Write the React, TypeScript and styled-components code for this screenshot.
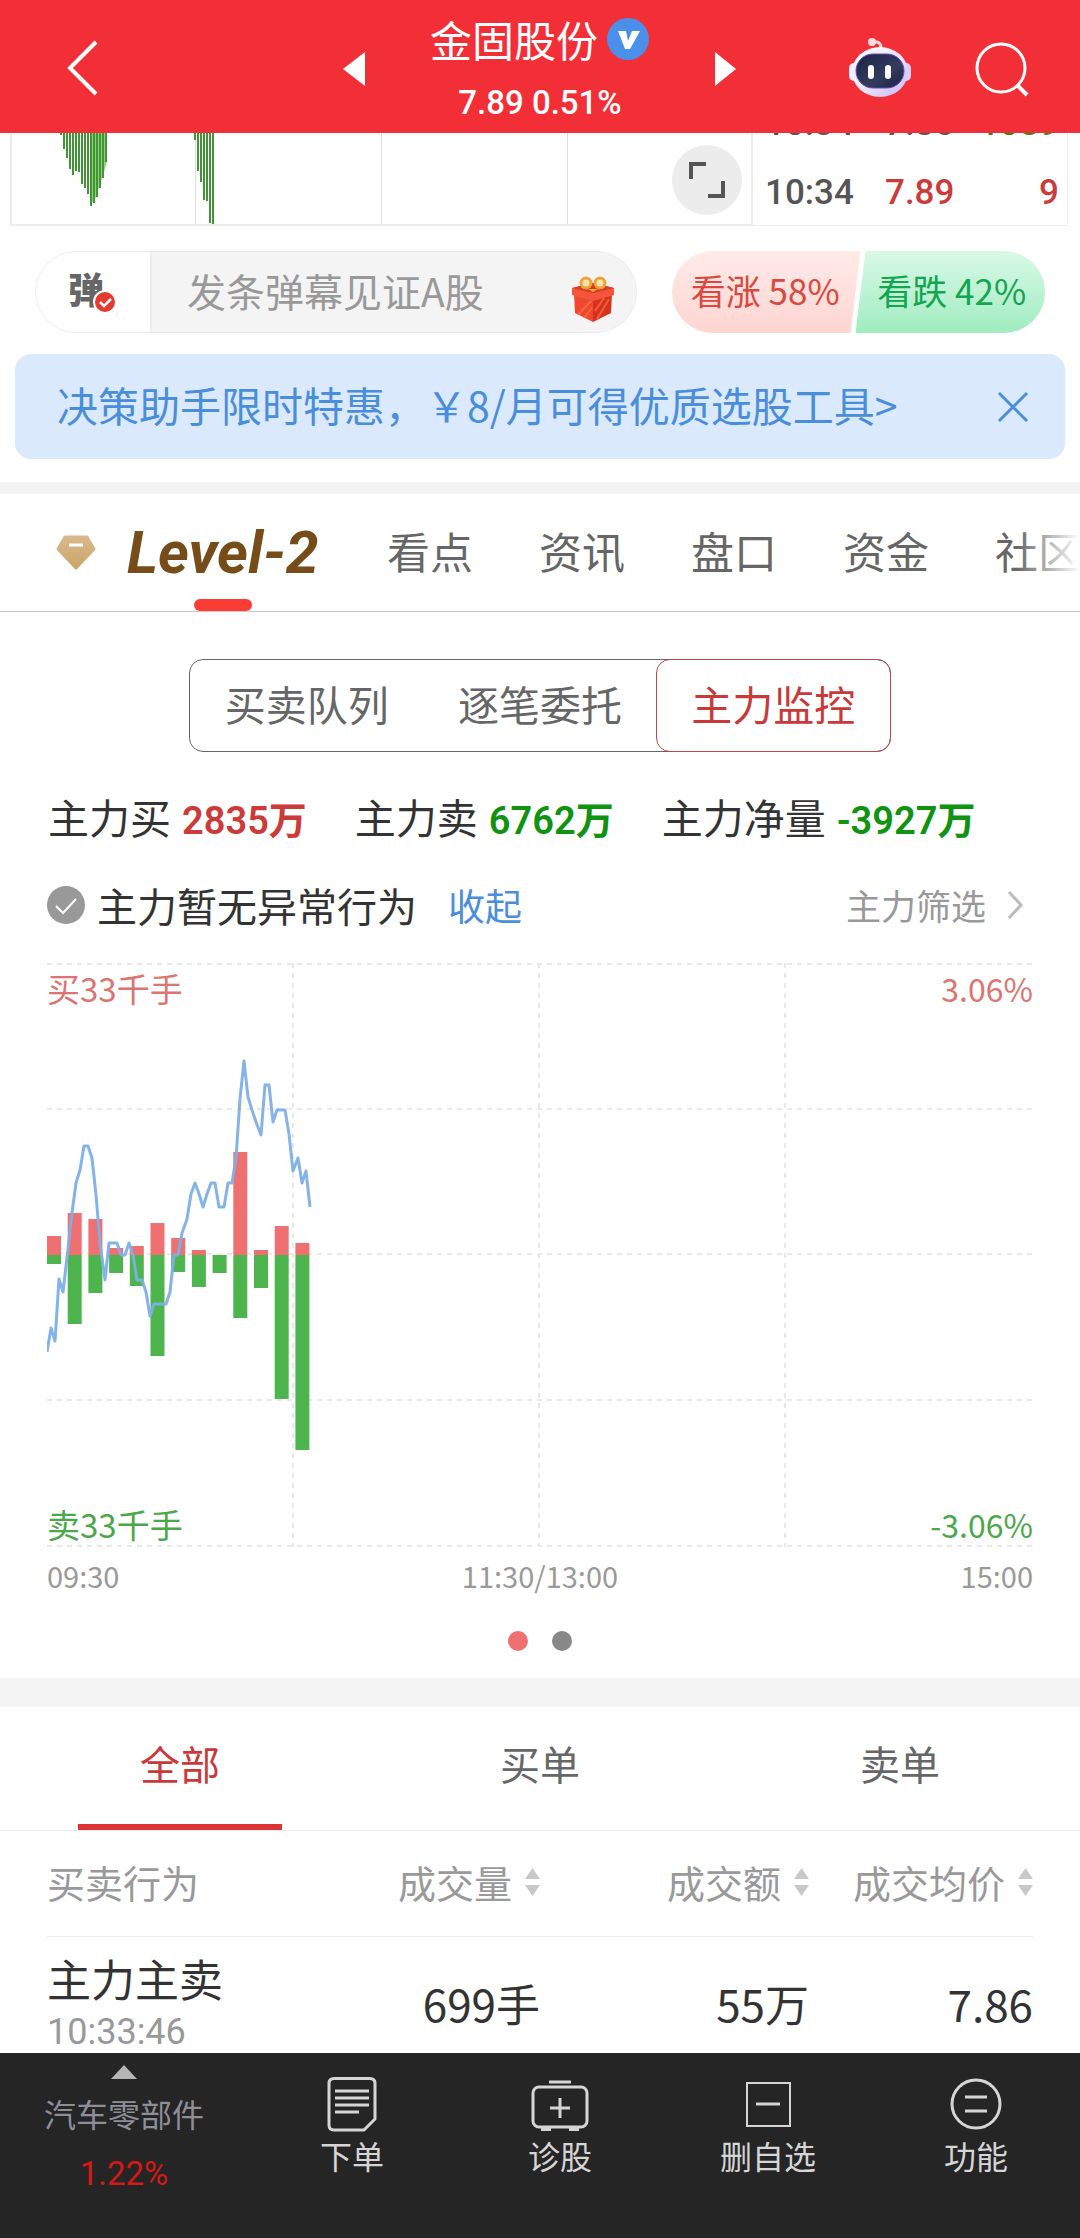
import React from "react";
import styled, { createGlobalStyle } from "styled-components";

const NUM = `Roboto, "Noto Sans CJK SC", sans-serif`;

const Global = createGlobalStyle`
  * { box-sizing: border-box; }
  body { margin: 0; background: #fff; color: #333; font-family: "Noto Sans CJK SC", sans-serif; }
  button { border: 0; padding: 0; margin: 0; background: none; font: inherit; color: inherit; cursor: pointer; }
  svg { display: block; flex: none; }
`;

const Page = styled.div`
  display: flex;
  flex-direction: column;
  min-height: 100vh;
  overflow-x: hidden;
`;

const Main = styled.main`
  flex: 1;
`;

/* ---------- header ---------- */

const Header = styled.header`
  display: grid;
  grid-template-columns: minmax(0, 1fr) auto minmax(0, 1fr);
  align-items: center;
  height: 133px;
  background: #f22f37;
  color: #fff;
`;

const HeaderSide = styled.div`
  display: flex;
  justify-content: space-between;
  align-items: center;
  padding: 4px 50px 0 65px;
`;

const HeaderLeft = styled(HeaderSide)`
  padding-right: 65px;
`;

const HeaderTools = styled.div`
  display: flex;
  align-items: center;
  gap: 62px;
`;

const Title = styled.div`
  display: flex;
  flex-direction: column;
  align-items: center;
  align-self: start;
  gap: 10px;
  padding-top: 9px;
`;

const StockName = styled.h1`
  display: flex;
  align-items: center;
  gap: 9px;
  margin: 0;
  font-size: 42px;
  font-weight: 400;
  line-height: 60px;
`;

const StockPrice = styled.div`
  font: 500 33px/48px ${NUM};
`;

/* ---------- minute chart strip ---------- */

const Strip = styled.section`
  display: flex;
  height: 93px;
  padding: 0 12px 0 10px;
  overflow: hidden;
`;

const MiniPlot = styled.div`
  position: relative;
  flex: 1;
  border: solid #ececec;
  border-width: 0 1px 2px 2px;
  overflow: hidden;
`;

const ExpandButton = styled.button`
  position: absolute;
  right: 9px;
  top: 12px;
  width: 70px;
  height: 70px;
  border-radius: 50%;
  background: #ececec;
  display: grid;
  place-items: center;
`;

const Ticks = styled.div`
  display: flex;
  flex-direction: column;
  justify-content: flex-end;
  width: 316px;
  border: solid #ececec;
  border-width: 0 1px 1px;
`;

const Tick = styled.div`
  display: grid;
  flex: none;
  grid-template-columns: 120px 1fr auto;
  align-items: center;
  height: 69px;
  padding: 4px 8px 0 12px;
  font: 500 35px/65px ${NUM};
  color: #555;
`;

const Tone = styled.span<{ $c: string }>`
  color: ${(p) => p.$c};
`;

/* ---------- bullet comments ---------- */

const CommentRow = styled.section`
  display: flex;
  gap: 35px;
  padding: 25px 35px 21px;
`;

const CommentBox = styled.div`
  display: flex;
  align-items: center;
  flex: 1;
  min-width: 0;
  height: 82px;
  border: 1px solid #ececec;
  border-radius: 41px;
  background: #f4f4f4;
  overflow: hidden;
`;

const BulletToggle = styled.button`
  position: relative;
  flex: none;
  width: 116px;
  height: 100%;
  padding: 0 14px 8px 0;
  border-right: 2px solid #ececec;
  background: #fff;
  color: #666;
  font-size: 36px;
  font-weight: 900;
  line-height: 70px;
`;

const BulletBadge = styled.svg`
  position: absolute;
  left: 57px;
  top: 38px;
`;

const CommentInput = styled.input`
  flex: 1;
  min-width: 0;
  padding: 0 0 5px 35px;
  border: 0;
  outline: 0;
  background: none;
  font-family: inherit;
  font-size: 39px;
  color: #333;
  &::placeholder { color: #999; opacity: 1; }
`;

const GiftButton = styled.button`
  flex: none;
  margin: 14px 21px 0 0;
`;

const Vote = styled.div`
  display: flex;
  width: 373px;
  height: 82px;
  border-radius: 41px;
  overflow: hidden;
`;

const VoteButton = styled.button<{ $up?: boolean }>`
  flex: 1;
  font-size: 35px;
  line-height: 78px;
  white-space: nowrap;
  margin-left: ${(p) => (p.$up ? 0 : "-5px")};
  padding: ${(p) => (p.$up ? "0 2px 4px 0" : "0 0 4px 3px")};
  color: ${(p) => (p.$up ? "#d9493f" : "#14a551")};
  background: ${(p) => (p.$up ? "linear-gradient(#ffebe9, #fdd5d1)" : "linear-gradient(#d9f9e6, #a0ecc0)")};
  clip-path: ${(p) =>
    p.$up
      ? "polygon(0 0, 100% 0, calc(100% - 10px) 100%, 0 100%)"
      : "polygon(10px 0, 100% 0, 100% 100%, 0 100%)"};
`;

const Banner = styled.aside`
  display: flex;
  align-items: center;
  justify-content: space-between;
  height: 105px;
  margin: 0 15px 23px;
  padding: 0 36px 0 42px;
  border-radius: 16px;
  background: #dae9fb;
  color: #4a8edb;
`;

const BannerLink = styled.a`
  padding-bottom: 5px;
  color: inherit;
  font-size: 41px;
  line-height: 60px;
  text-decoration: none;
  white-space: nowrap;
`;

const Divider = styled.div<{ $h: number }>`
  height: ${(p) => p.$h}px;
  background: #f4f4f4;
`;

/* ---------- main tabs ---------- */

const MainTabs = styled.nav`
  position: relative;
  display: flex;
  align-items: center;
  gap: 66px;
  height: 118px;
  padding-left: 55px;
  border-bottom: 1px solid #c8c8c8;
  overflow: hidden;
  &::after {
    content: "";
    position: absolute;
    inset: 0 0 0 auto;
    width: 64px;
    background: linear-gradient(90deg, rgba(255, 255, 255, 0), #fff);
  }
`;

const MainTab = styled.button`
  flex: none;
  padding-bottom: 5px;
  font-size: 43px;
  line-height: 60px;
  color: #666;
`;

const LevelTab = styled.button`
  position: relative;
  display: flex;
  flex: none;
  align-items: center;
  gap: 30px;
  width: 266px;
  height: 100%;
  color: #764d18;
  font: italic 700 59px/60px ${NUM};
  &::after {
    content: "";
    position: absolute;
    left: 139px;
    bottom: 0;
    width: 58px;
    height: 12px;
    border-radius: 6px;
    background: #fa3c32;
  }
`;

/* ---------- monitor panel ---------- */

const Segments = styled.div`
  display: flex;
  width: 702px;
  height: 93px;
  margin: 47px auto 0;
  border: 1px solid #666;
  border-radius: 14px;
`;

const Segment = styled.button<{ $active?: boolean }>`
  flex: 1;
  margin: -1px;
  padding-bottom: 5px;
  font-size: 41px;
  line-height: 60px;
  color: ${(p) => (p.$active ? "#c9393a" : "#666")};
  border: 1px solid ${(p) => (p.$active ? "#b9494a" : "transparent")};
  border-radius: 14px;
`;

const Stats = styled.div`
  display: flex;
  gap: 48px;
  padding: 34px 47px 0 48px;
  white-space: nowrap;
`;

const Stat = styled.div<{ $c: string }>`
  display: flex;
  align-items: baseline;
  gap: 11px;
  height: 60px;
  font-size: 41px;
  line-height: 60px;
  b {
    color: ${(p) => p.$c};
    font: 600 38px/60px ${NUM};
  }
`;

const StatusRow = styled.div`
  display: flex;
  align-items: center;
  padding: 29px 56px 0 47px;
  font-size: 40px;
  line-height: 60px;
`;

const StatusText = styled.span`
  margin: 0 31px 0 12px;
`;

const FoldButton = styled.button`
  color: #4a8edb;
  font-size: 37px;
`;

const FilterButton = styled.button`
  display: flex;
  align-items: center;
  gap: 20px;
  margin-left: auto;
  color: #999;
  font-size: 35px;
`;

const ChartFrame = styled.div`
  position: relative;
  margin: 28px 47px 0;
`;

const ChartSvg = styled.svg`
  width: 100%;
  height: auto;
`;

const ChartLabel = styled.span<{ $right?: boolean; $bottom?: boolean }>`
  position: absolute;
  ${(p) => (p.$right ? "right: 0;" : "left: 0;")}
  ${(p) => (p.$bottom ? "bottom: 3px;" : "top: 5px;")}
  font-size: ${(p) => (p.$right ? 32 : 33)}px;
  line-height: 40px;
  color: ${(p) => (p.$bottom ? "#4aa84a" : "#dc7472")};
`;

const Axis = styled.div`
  display: grid;
  grid-template-columns: 1fr auto 1fr;
  padding: 6px 47px 0;
  color: #999;
  font-size: 29px;
  line-height: 44px;
  span:last-child { text-align: right; }
`;

const Dots = styled.div`
  display: flex;
  justify-content: center;
  gap: 24px;
  padding: 34px 0 27px;
`;

const Dot = styled.button<{ $active?: boolean }>`
  width: 20px;
  height: 20px;
  border-radius: 50%;
  background: ${(p) => (p.$active ? "#ee7071" : "#888")};
`;

/* ---------- orders ---------- */

const OrderTabs = styled.nav`
  display: grid;
  grid-template-columns: repeat(3, 1fr);
  border-bottom: 1px solid #ececec;
`;

const OrderTab = styled.button<{ $active?: boolean }>`
  position: relative;
  height: 123px;
  padding-bottom: 11px;
  font-size: 40px;
  line-height: 60px;
  color: ${(p) => (p.$active ? "#c9393a" : "#666")};
  &::after {
    content: "";
    position: absolute;
    left: 50%;
    bottom: 0;
    width: 204px;
    height: 6px;
    margin-left: -102px;
    background: ${(p) => (p.$active ? "#db3434" : "transparent")};
  }
`;

const TableWrap = styled.div`
  padding: 0 47px;
`;

const Orders = styled.table`
  width: 100%;
  table-layout: fixed;
  border-collapse: collapse;
  th, td { padding: 0; text-align: right; white-space: nowrap; }
  th:first-child, td:first-child { text-align: left; }
  th {
    height: 105px;
    padding-bottom: 2px;
    border-bottom: 1px solid #ececec;
    color: #999;
    font-size: 38px;
    font-weight: 400;
    line-height: 60px;
  }
  td { height: 115px; font-size: 44px; line-height: 60px; }
`;

const SortButton = styled.button`
  display: inline-flex;
  align-items: center;
  gap: 13px;
`;

const OrderName = styled.div`
  padding-top: 11px;
  font-size: 44px;
  line-height: 60px;
`;

const OrderTime = styled.time`
  display: block;
  padding-top: 4px;
  color: #999;
  font: 400 36px/40px ${NUM};
`;

const Value = styled.div`
  padding-top: 18px;
`;

/* ---------- bottom bar ---------- */

const BottomBar = styled.nav`
  position: sticky;
  bottom: 0;
  display: grid;
  grid-template-columns: 248px repeat(4, 1fr);
  height: 185px;
  background: #252525;
  color: #d5d5d5;
  font-size: 32px;
`;

const Sector = styled.button`
  display: flex;
  flex-direction: column;
  align-items: center;
  padding-top: 12px;
  color: #8e8e98;
`;

const SectorName = styled.span`
  padding-top: 12px;
  line-height: 44px;
`;

const SectorChange = styled.span`
  padding-top: 17px;
  color: #d41a14;
  font: 400 33px/44px ${NUM};
`;

const Action = styled.button`
  display: flex;
  flex-direction: column;
  align-items: center;
  padding-top: 21px;
  line-height: 42px;
`;

/* ---------- data ---------- */

const miniBars: [number, number][] = [
  [48, 2], [51, 16], [54, 25], [57, 36], [60, 42], [63, 38], [66, 39], [69, 51], [72, 55],
  [75, 61], [78, 73], [81, 70], [84, 64], [87, 55], [90, 45], [93, 29],
  [182, 7], [185, 38], [188, 49], [191, 67], [194, 68], [197, 90], [200, 92],
];

const flow: [number, number][] = [
  [19, 9], [42, 69], [36, 38], [7, 18], [9, 31], [32, 101], [17, 17],
  [5, 32], [0, 18], [103, 63], [5, 33], [29, 144], [12, 195],
];

const priceLine =
  "0,389 4,365 8,378 12,316 16,329 21,286 25,250 29,220 33,207 37,183 41,183 45,195 49,232 53,280 58,317 62,280 70,280 74,292 78,292 82,280 86,292 90,317 95,317 99,329 103,353 107,341 119,341 123,329 127,292 131,292 135,270 140,256 144,231 148,220 152,231 156,244 160,231 164,220 168,220 172,244 177,244 181,220 185,220 189,195 193,136 197,98 201,134 205,147 209,159 214,172 218,122 222,122 226,159 230,147 238,147 242,171 246,208 251,195 255,220 259,208 263,244";

/* ---------- drawings ---------- */

const SortIcon = () => (
  <svg width="15" height="28" viewBox="0 0 15 28" fill="#c8c8c8">
    <path d="M7.500 0 15 11H0zM7.500 28 0 17h15z" />
  </svg>
);

const Robot = () => (
  <svg width="64" height="62" viewBox="0 0 64 62">
    <defs>
      <linearGradient id="shell" x1="0" y1="0" x2="1" y2="1">
        <stop offset="0" stopColor="#fff" />
        <stop offset="0.500" stopColor="#f0e6fb" />
        <stop offset="1" stopColor="#c5b6f5" />
      </linearGradient>
      <linearGradient id="visor" x1="0" y1="0" x2="1" y2="1">
        <stop offset="0" stopColor="#1b2344" />
        <stop offset="0.600" stopColor="#333c5c" />
        <stop offset="1" stopColor="#1a2142" />
      </linearGradient>
    </defs>
    <path d="M24 4c6-1 9 1 9 6" fill="none" stroke="#ffd9de" strokeWidth="3" />
    <circle cx="24" cy="4" r="4" fill="#ffdbe2" />
    <rect x="1" y="25" width="10" height="18" rx="5" fill="#f3edff" />
    <rect x="53" y="25" width="10" height="18" rx="5" fill="#d8d0fb" />
    <ellipse cx="32" cy="34" rx="28" ry="25" fill="url(#shell)" />
    <rect x="8" y="16" width="48" height="34" rx="17" fill="url(#visor)" stroke="#5a4fc0" strokeWidth="1" />
    <rect x="20" y="27" width="6" height="14" rx="3" fill="#fff" />
    <rect x="37" y="27" width="6" height="14" rx="3" fill="#fff" />
  </svg>
);

const Gift = () => (
  <svg width="44" height="48" viewBox="0 0 44 48">
    <path d="M3 19 22 25v22L4 38z" fill="#f0492f" />
    <path d="M41 19 22 25v22l18-9z" fill="#d8331f" />
    <path d="M7 40 20 26M13 43l8-10M26 44l12-20M24 36l9-13" stroke="#ff7a4c" strokeWidth="2" opacity="0.600" />
    <path d="M1 13 22 8l21 5v7l-21 6L1 20z" fill="#f5553a" />
    <path d="M1 13 22 18l21-5-21-5z" fill="#d93a24" />
    <circle cx="15" cy="8" r="5" fill="#f7dfae" stroke="#eda436" strokeWidth="3" />
    <circle cx="29" cy="8" r="5" fill="#f7dfae" stroke="#eda436" strokeWidth="3" />
    <path d="M17 14h10l-5 3z" fill="#f0ac3c" />
  </svg>
);

const Diamond = () => (
  <svg width="42" height="38" viewBox="0 0 42 38">
    <defs>
      <linearGradient id="gold" x1="0" y1="0" x2="0" y2="1">
        <stop offset="0" stopColor="#d8b88c" />
        <stop offset="1" stopColor="#cda469" />
      </linearGradient>
    </defs>
    <path d="M10 3h22l7 12-18 19L3 15z" fill="url(#gold)" stroke="url(#gold)" strokeWidth="3" strokeLinejoin="round" />
    <path d="M14 11h14" stroke="#fff" strokeWidth="3" />
  </svg>
);

const FlowChart = () => (
  <ChartSvg viewBox="0 0 986 584" role="img" aria-label="主力监控">
    <g stroke="#e8e8e8" strokeWidth="2" strokeDasharray="5 5" fill="none">
      {[1, 146, 291, 437].map((y) => <path key={y} d={`M0 ${y}H986`} />)}
      <path d="M0 583H986" />
      {[246, 492, 738].map((x) => <path key={x} d={`M${x} 0V584`} />)}
    </g>
    {flow.map(([up, down], i) => (
      <g key={i}>
        <rect x={i * 20.700} y={292 - up} width="14" height={up} fill="#ee7071" />
        <rect x={i * 20.700} y="292" width="14" height={down} fill="#4eb54e" />
      </g>
    ))}
    <polyline points={priceLine} fill="none" stroke="#7eaee5" strokeWidth="3" strokeLinejoin="round" opacity="0.940" />
  </ChartSvg>
);

const NavIcon = ({ children }: { children: React.ReactNode }) => (
  <svg width="60" height="60" viewBox="0 0 60 60" fill="none" stroke="#d5d5d5" strokeWidth="3">{children}</svg>
);

export default function App() {
  return (
    <Page>
      <Global />
      <Header>
        <HeaderLeft>
          <button aria-label="返回">
            <svg width="34" height="60" viewBox="0 0 34 60"><path d="M31 3 5 29l26 26" fill="none" stroke="#fff" strokeWidth="4" /></svg>
          </button>
          <button aria-label="上一只">
            <svg width="22" height="34" viewBox="0 0 22 34"><path d="M22 0v34L0 17z" fill="#fff" /></svg>
          </button>
        </HeaderLeft>
        <Title>
          <StockName>
            金固股份
            <svg width="43" height="43" viewBox="0 0 43 43">
              <circle cx="21" cy="21" r="21" fill="#4a90ea" />
              <path d="M11 13h8l2 10 4-10h8L23 31h-5z" fill="#fff" />
            </svg>
          </StockName>
          <StockPrice>7.89 0.51%</StockPrice>
        </Title>
        <HeaderSide>
          <button aria-label="下一只">
            <svg width="22" height="34" viewBox="0 0 22 34"><path d="M0 0v34l21-17z" fill="#fff" /></svg>
          </button>
          <HeaderTools>
            <button aria-label="智能助手"><Robot /></button>
            <button aria-label="搜索">
              <svg width="56" height="56" viewBox="0 0 56 56" fill="none" stroke="#fff" strokeWidth="3">
                <circle cx="27" cy="27" r="24" /><path d="m43 44 10 10" strokeWidth="4" />
              </svg>
            </button>
          </HeaderTools>
        </HeaderSide>
      </Header>

      <Main>
        <Strip>
          <MiniPlot>
            <svg width="740" height="92" viewBox="0 0 740 92">
              <path d="M183.500 0V92M369.500 0V92M555.500 0V92" stroke="#ddd" />
              <path d="M78 0h17v29l-5 16-6 19-6 9z" fill="#8fd47c" />
              {miniBars.map(([x, h]) => <rect key={x} x={x} y="0" width="2" height={h} fill="#429436" />)}
            </svg>
            <ExpandButton aria-label="全屏">
              <svg width="38" height="38" viewBox="0 0 38 38" fill="none" stroke="#555" strokeWidth="4">
                <path d="M18 3H3v15M20 35h15V20" />
              </svg>
            </ExpandButton>
          </MiniPlot>
          <Ticks>
            <Tick><span>10:34</span><span>7.85</span><Tone $c="#2f8a0f">1089</Tone></Tick>
            <Tick><span>10:34</span><Tone $c="#cb3b3a">7.89</Tone><Tone $c="#cb3b3a">9</Tone></Tick>
          </Ticks>
        </Strip>

        <CommentRow>
          <CommentBox>
            <BulletToggle>
              弹
              <BulletBadge width="24" height="24" viewBox="0 0 24 24">
                <circle cx="12" cy="12" r="11" fill="#e33b30" stroke="#fff" strokeWidth="2" />
                <path d="m7 12 4 4 7-7" fill="none" stroke="#fff" strokeWidth="2.500" />
              </BulletBadge>
            </BulletToggle>
            <CommentInput aria-label="发弹幕" placeholder="发条弹幕见证A股" />
            <GiftButton aria-label="礼物"><Gift /></GiftButton>
          </CommentBox>
          <Vote>
            <VoteButton $up>看涨 58%</VoteButton>
            <VoteButton>看跌 42%</VoteButton>
          </Vote>
        </CommentRow>

        <Banner>
          <BannerLink href="#">决策助手限时特惠，￥8/月可得优质选股工具&gt;</BannerLink>
          <button aria-label="关闭">
            <svg width="32" height="32" viewBox="0 0 32 32"><path d="m2 2 28 28M30 2 2 30" stroke="#4a8edb" strokeWidth="3" /></svg>
          </button>
        </Banner>

        <Divider $h={12} />

        <MainTabs>
          <LevelTab><Diamond />Level-2</LevelTab>
          {["看点", "资讯", "盘口", "资金", "社区"].map((t) => <MainTab key={t}>{t}</MainTab>)}
        </MainTabs>

        <Segments>
          <Segment>买卖队列</Segment>
          <Segment>逐笔委托</Segment>
          <Segment $active>主力监控</Segment>
        </Segments>

        <Stats>
          <Stat $c="#cb3b3a">主力买<b>2835万</b></Stat>
          <Stat $c="#0f9310">主力卖<b>6762万</b></Stat>
          <Stat $c="#0f9310">主力净量<b>-3927万</b></Stat>
        </Stats>

        <StatusRow>
          <svg width="38" height="38" viewBox="0 0 38 38">
            <circle cx="19" cy="19" r="19" fill="#999" />
            <path d="m9 20 7 7 13-14" fill="none" stroke="#fff" strokeWidth="2" />
          </svg>
          <StatusText>主力暂无异常行为</StatusText>
          <FoldButton>收起</FoldButton>
          <FilterButton>
            主力筛选
            <svg width="18" height="30" viewBox="0 0 18 30"><path d="m3 2 12 13L3 28" fill="none" stroke="#bbb" strokeWidth="3" /></svg>
          </FilterButton>
        </StatusRow>

        <ChartFrame>
          <FlowChart />
          <ChartLabel>买33千手</ChartLabel>
          <ChartLabel $right>3.06%</ChartLabel>
          <ChartLabel $bottom>卖33千手</ChartLabel>
          <ChartLabel $bottom $right>-3.06%</ChartLabel>
        </ChartFrame>
        <Axis><span>09:30</span><span>11:30/13:00</span><span>15:00</span></Axis>
        <Dots><Dot $active aria-label="第1页" /><Dot aria-label="第2页" /></Dots>

        <Divider $h={29} />

        <OrderTabs>
          <OrderTab $active>全部</OrderTab>
          <OrderTab>买单</OrderTab>
          <OrderTab>卖单</OrderTab>
        </OrderTabs>

        <TableWrap>
          <Orders>
            <colgroup><col width="227" /><col width="266" /><col width="269" /><col /></colgroup>
            <thead>
              <tr>
                <th>买卖行为</th>
                {["成交量", "成交额", "成交均价"].map((t) => (
                  <th key={t}><SortButton>{t}<SortIcon /></SortButton></th>
                ))}
              </tr>
            </thead>
            <tbody>
              <tr>
                <td><OrderName>主力主卖</OrderName><OrderTime>10:33:46</OrderTime></td>
                <td><Value>699手</Value></td>
                <td><Value>55万</Value></td>
                <td><Value>7.86</Value></td>
              </tr>
            </tbody>
          </Orders>
        </TableWrap>
      </Main>

      <BottomBar>
        <Sector>
          <svg width="26" height="14" viewBox="0 0 26 14"><path d="M13 0 26 14H0z" fill="#b5b5b5" /></svg>
          <SectorName>汽车零部件</SectorName>
          <SectorChange>1.22%</SectorChange>
        </Sector>
        <Action>
          <NavIcon>
            <path d="M12 4.500h36q5 0 5 5V45L42 56H12q-5 0-5-5V9.500q0-5 5-5z" />
            <path d="M13 17h34M13 24h34M13 31h34M13 38h24" />
          </NavIcon>
          下单
        </Action>
        <Action>
          <NavIcon>
            <rect x="3" y="13" width="54" height="40" rx="6" />
            <path d="M19 8h22M30 24v20M20 34h20" />
            <path d="M11 55h10M39 55h10" strokeWidth="4" />
          </NavIcon>
          诊股
        </Action>
        <Action>
          <NavIcon><rect x="9" y="9" width="43" height="43" strokeWidth="2" /><path d="M18 30h24" /></NavIcon>
          删自选
        </Action>
        <Action>
          <NavIcon><circle cx="30" cy="30" r="24" /><path d="M19 23h22M19 37h22" /></NavIcon>
          功能
        </Action>
      </BottomBar>
    </Page>
  );
}
